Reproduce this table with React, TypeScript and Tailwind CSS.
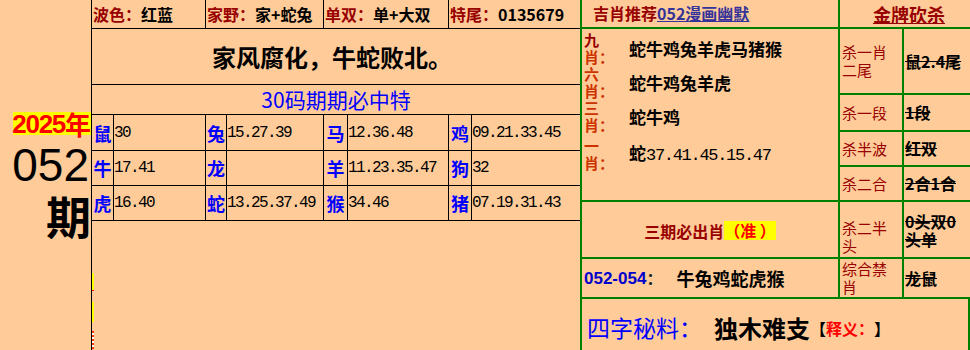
const cjk = "font-['Noto_Sans_CJK_SC',sans-serif]";

function TopCell({ label, value, w }: { label: string; value: string; w: string }) {
  return (
    <div className={`${w} h-full border-r border-black pl-[1px] text-[16px] font-bold leading-[28px] whitespace-nowrap overflow-hidden`}>
      <span className="text-[#990000]">{label}</span>
      <span className="text-black">{value}</span>
    </div>
  );
}

function TRow({ h, cells }: { h: string; cells: [string, string][] }) {
  const widths = [
    ["w-[22px]", "w-[92px]"],
    ["w-[21px]", "w-[97px]"],
    ["w-[24px]", "w-[101px]"],
    ["w-[23px]", "flex-1"],
  ];
  return (
    <div className={`${h} border-b border-black flex shrink-0`}>
      {cells.map(([z, n], i) => (
        <div key={i} className={`flex ${i === 3 ? "flex-1" : ""}`}>
          <div className={`${widths[i][0]} border-r border-black flex items-center justify-center text-[18px] font-bold text-[#0000FF] leading-none`}>
            {z}
          </div>
          <div
            className={`${widths[i][1]} ${i < 3 ? "border-r border-black" : ""} flex items-center text-[16px] tracking-[-1.6px] font-['Liberation_Mono',monospace] text-black leading-none`}
          >
            {n}
          </div>
        </div>
      ))}
    </div>
  );
}

function Shio({ a, b, aColor, value, mt }: { a: string; b: string; aColor: string; value: React.ReactNode; mt?: string }) {
  return (
    <div className={`h-[34px] flex items-center ${mt ?? ""}`}>
      <div className="w-[47px] pl-[2px] text-[15px] leading-[17px] font-bold self-start">
        <div style={{ color: aColor }}>{a}</div>
        <div className="text-[#CC3300] whitespace-nowrap">{b}</div>
      </div>
      <div className="text-[17px] font-bold text-black leading-none whitespace-nowrap">{value}</div>
    </div>
  );
}

function KLabel({ children, extra }: { children: React.ReactNode; extra?: string }) {
  return (
    <div className={`bg-[#FFCC99] flex items-center pl-[2px] text-[15px] leading-[18px] text-[#990000] ${extra ?? ""}`}>
      <div>{children}</div>
    </div>
  );
}

function KValue({ children }: { children: React.ReactNode }) {
  return (
    <div className="bg-[#FFCC99] flex items-center pl-[1px] text-[16px] leading-[17px] font-bold text-black">
      <div className="line-through whitespace-nowrap">{children}</div>
    </div>
  );
}

export default function App() {
  return (
    <div className={`w-[970px] h-[350px] overflow-hidden bg-[#FFCC99] flex ${cjk} text-black`}>
      {/* Left panel */}
      <div className="w-[92px] shrink-0 border-r border-black flex flex-col items-end pt-[112px]">
        <div className="bg-[#FFFF00] h-[23px] w-[78px] flex items-center justify-end text-[#FF0000] font-bold text-[26px] leading-none whitespace-nowrap">
          <span className="font-['Liberation_Sans',sans-serif] tracking-[-1.3px]">2025</span>
          <span className={cjk}>年</span>
        </div>
        <div className="mt-[7px] pr-[2px] text-[46px] leading-none font-['Liberation_Sans',sans-serif]">052</div>
        <div className="mt-[5px] text-[45px] leading-none font-bold">期</div>
      </div>

      {/* Middle */}
      <div className="w-[488px] shrink-0 flex flex-col">
        <div className="h-[29px] shrink-0 border-b border-black flex">
          <TopCell w="w-[114px]" label="波色：" value="红蓝" />
          <TopCell w="w-[118px]" label="家野：" value="家+蛇兔" />
          <TopCell w="w-[125px]" label="单双：" value="单+大双" />
          <div className="flex-1 h-full pl-[1px] text-[16px] font-bold leading-[28px] whitespace-nowrap">
            <span className="text-[#990000]">特尾：</span>
            <span>0135679</span>
          </div>
        </div>
        <div className="h-[56px] shrink-0 border-b border-black flex items-center justify-center pr-[8px] text-[24px] font-bold leading-none">
          家风腐化，牛蛇败北。
        </div>
        <div className="h-[30px] shrink-0 border-b border-black flex items-center justify-center text-[21px] text-[#0000FF] leading-none">
          30码期期必中特
        </div>
        <TRow h="h-[36px]" cells={[["鼠", "30"], ["兔", "15.27.39"], ["马", "12.36.48"], ["鸡", "09.21.33.45"]]} />
        <TRow h="h-[35px]" cells={[["牛", "17.41"], ["龙", ""], ["羊", "11.23.35.47"], ["狗", "32"]]} />
        <TRow h="h-[35px]" cells={[["虎", "16.40"], ["蛇", "13.25.37.49"], ["猴", "34.46"], ["猪", "07.19.31.43"]]} />
        <div className="flex-1 flex flex-col pt-[52px]">
          <div className="w-[2px] h-[18px] bg-[#FFFF00] border-b border-[#FF0000]" />
          <div className="w-[2px] h-[20px] bg-[#FFFF00] mt-[11px]" />
          <div className="w-[2px] h-[18px] mt-[9px] border-l-2 border-dotted border-[#FF3300] bg-white" />
        </div>
      </div>

      {/* Right panel */}
      <div className="w-[390px] shrink-0 flex flex-col overflow-hidden">
        <div className="grid grid-cols-[256px_62px_66px] grid-rows-[27px_64px_35px_33px_33px_55px_38px] gap-[2px] bg-[#008000] pl-[2px] pb-[2px]">
          <div className="bg-[#FFCC99] pl-[11px] text-[16px] font-bold leading-[27px] whitespace-nowrap">
            <span className="text-[#990000]">吉肖推荐</span>
            <span className="text-[#333399] underline">052漫画幽默</span>
          </div>
          <div className="col-span-2 bg-[#FFCC99] flex items-center justify-center pl-[8px] text-[18px] font-bold text-[#990000] leading-[22px] underline">
            金牌砍杀
          </div>

          <div className="row-span-4 bg-[#FFCC99] flex flex-col pt-[2px]">
            <Shio a="九" b="肖：" aColor="#990000" value="蛇牛鸡兔羊虎马猪猴" />
            <Shio a="六" b="肖：" aColor="#CC3300" value="蛇牛鸡兔羊虎" />
            <Shio a="三" b="肖：" aColor="#CC3300" value="蛇牛鸡" />
            <Shio
              a="一"
              b="肖："
              aColor="#CC3300"
              mt="mt-[4px]"
              value={
                <span>
                  蛇<span className="font-['Liberation_Mono',monospace] font-normal tracking-[-1.3px]">37.41.45.15.47</span>
                </span>
              }
            />
          </div>
          <KLabel>杀一肖<br />二尾</KLabel>
          <KValue>鼠2.4尾</KValue>
          <KLabel>杀一段</KLabel>
          <KValue>1段</KValue>
          <KLabel>杀半波</KLabel>
          <KValue>红双</KValue>
          <KLabel>杀二合</KLabel>
          <KValue>2合1合</KValue>

          <div className="bg-[#FFCC99] flex items-center justify-center pt-[2px] text-[16px] font-bold leading-none whitespace-nowrap">
            <span className="text-[#990000]">三期必出肖</span>
            <span className="bg-[#FFFF00] text-[#FF0000] leading-[19px]">（准 ）</span>
          </div>
          <KLabel extra="pt-[14px]">杀二半<br />头</KLabel>
          <div className="bg-[#FFCC99] flex items-center pl-[1px] text-[16px] leading-[18px] font-bold text-black">
            <div className="line-through">0头双0<br />头单</div>
          </div>

          <div className="bg-[#FFCC99] flex items-center pl-[2px] whitespace-nowrap leading-none">
            <span className="font-['Liberation_Sans',sans-serif] font-bold text-[17px] text-[#0000CC]">052-054</span>
            <span className="text-[16px] font-bold text-[#222]">：</span>
            <span className="ml-[14px] text-[18px] font-bold">牛兔鸡蛇虎猴</span>
          </div>
          <KLabel>综合禁<br />肖</KLabel>
          <KValue>龙鼠</KValue>
        </div>

        <div className="flex-1 bg-[#008000] pl-[2px] pr-[2px] flex">
          <div className="flex-1 bg-[#FFCC99] flex items-center pl-[5px] pt-[6px] whitespace-nowrap leading-none">
            <span className="text-[23px] text-[#0000FF]">四字秘料：</span>
            <span className="ml-[12px] text-[24px] font-bold">独木难支</span>
            <span className="text-[16px] font-bold">【</span>
            <span className="text-[16px] font-bold text-[#FF0000]">释义：</span>
            <span className="text-[16px] font-bold">】</span>
          </div>
        </div>
      </div>
    </div>
  );
}
